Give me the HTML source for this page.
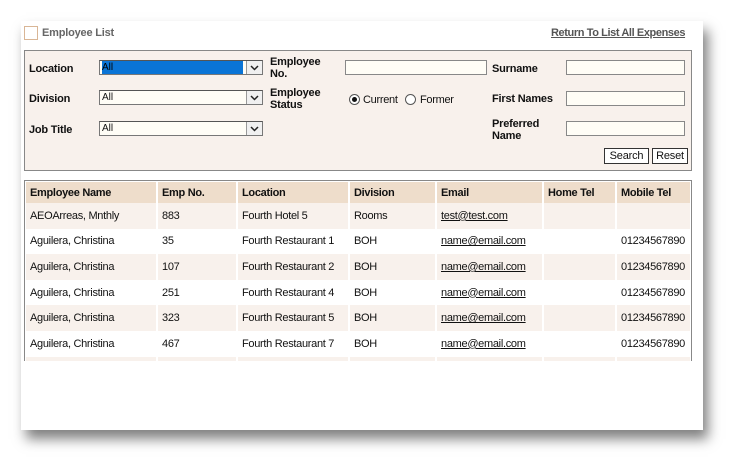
<!DOCTYPE html>
<html><head><style>
*{margin:0;padding:0;box-sizing:border-box}
body{width:745px;height:472px;background:#fff;position:relative;overflow:hidden;font-family:"Liberation Sans","DejaVu Sans",sans-serif;font-size:11px;color:#111}
.card{position:absolute;left:21px;top:21px;width:682px;height:409px;background:#fff;box-shadow:5px 9px 12px rgba(0,0,0,.5)}
.abs{position:absolute}
.lbl{font-weight:bold;font-size:11px;line-height:12px;letter-spacing:-0.2px}
.sel{position:absolute;height:15px;border:1px solid #777;border-top-color:#555;background:#fffdf6;font-size:10px;line-height:13px;padding-left:2px}
.sel .ar{position:absolute;right:0;top:0;width:16px;height:13px;border-left:1px solid #999;background:#f0f0f0}
.inp{position:absolute;height:15px;border:1px solid #888;background:#fffdf6}
.btn{position:absolute;height:16px;border:1px solid #333;background:#fff;font-size:11px;line-height:14px;text-align:center;letter-spacing:-0.2px}
table{border-collapse:separate;border-spacing:2px 0;position:absolute;left:24px;top:182px;width:668px}
td,th{height:25.6px;padding-left:4px;text-align:left;font-size:11px;white-space:nowrap;letter-spacing:-0.3px}
th{height:21px;background:#eeddcb;font-weight:bold}
tr.o td{background:#f8f1ec}
u{text-decoration:underline}
</style></head><body>
<div class="card"></div>
<div class="abs" style="left:24px;top:26px;width:14px;height:14px;border:1px solid #d9b696"></div>
<div class="abs lbl" style="left:42px;top:27px;color:#666">Employee List</div>
<div class="abs lbl" style="left:551px;top:27px;color:#555;text-decoration:underline;letter-spacing:-0.4px">Return To List All Expenses</div>
<div class="abs" style="left:24px;top:50px;width:668px;height:121px;background:#f8f1ec;border:1px solid #888"></div>
<div class="abs lbl" style="left:29px;top:63px">Location</div>
<div class="abs lbl" style="left:29px;top:93px">Division</div>
<div class="abs lbl" style="left:29px;top:124px">Job Title</div>
<div class="sel" style="left:99px;top:60px;width:164px"><span style="background:#0a74d6;color:#000;display:inline-block;width:141px">All</span><div class="ar"><svg width="15" height="13"><path d="M4 5l3.5 3.5L11 5" stroke="#222" stroke-width="1.5" fill="none"/></svg></div></div>
<div class="sel" style="left:99px;top:90px;width:164px">All<div class="ar"><svg width="15" height="13"><path d="M4 5l3.5 3.5L11 5" stroke="#222" stroke-width="1.5" fill="none"/></svg></div></div>
<div class="sel" style="left:99px;top:121px;width:164px">All<div class="ar"><svg width="15" height="13"><path d="M4 5l3.5 3.5L11 5" stroke="#222" stroke-width="1.5" fill="none"/></svg></div></div>
<div class="abs lbl" style="left:270px;top:56px">Employee<br>No.</div>
<div class="abs lbl" style="left:270px;top:87px">Employee<br>Status</div>
<div class="inp" style="left:345px;top:60px;width:142px"></div>
<div class="abs" style="left:349px;top:94px;width:11px;height:11px;border:1px solid #555;border-radius:50%;background:#fff"><div style="margin:2px;width:5px;height:5px;border-radius:50%;background:#111"></div></div>
<div class="abs" style="left:363px;top:94px;font-size:11px;letter-spacing:-0.3px">Current</div>
<div class="abs" style="left:405px;top:94px;width:11px;height:11px;border:1px solid #555;border-radius:50%;background:#fff"></div>
<div class="abs" style="left:420px;top:94px;font-size:11px;letter-spacing:-0.3px">Former</div>
<div class="abs lbl" style="left:492px;top:63px">Surname</div>
<div class="abs lbl" style="left:492px;top:93px">First Names</div>
<div class="abs lbl" style="left:492px;top:118px">Preferred<br>Name</div>
<div class="inp" style="left:566px;top:60px;width:119px"></div>
<div class="inp" style="left:566px;top:91px;width:119px"></div>
<div class="inp" style="left:566px;top:121px;width:119px"></div>
<div class="btn" style="left:604px;top:148px;width:45px">Search</div>
<div class="btn" style="left:652px;top:148px;width:36px">Reset</div>
<div class="abs" style="left:24px;top:180px;width:668px;height:181px;border:1px solid #888;border-bottom:none"></div>
<table>
<tr><th style="width:130px">Employee Name</th><th style="width:78px">Emp No.</th><th style="width:110px">Location</th><th style="width:85px">Division</th><th style="width:105px">Email</th><th style="width:71px">Home Tel</th><th>Mobile Tel</th></tr>
<tr class="o"><td>AEOArreas, Mnthly</td><td>883</td><td>Fourth Hotel 5</td><td>Rooms</td><td><u>test@test.com</u></td><td></td><td></td></tr>
<tr><td>Aguilera, Christina</td><td>35</td><td>Fourth Restaurant 1</td><td>BOH</td><td><u>name@email.com</u></td><td></td><td>01234567890</td></tr>
<tr class="o"><td>Aguilera, Christina</td><td>107</td><td>Fourth Restaurant 2</td><td>BOH</td><td><u>name@email.com</u></td><td></td><td>01234567890</td></tr>
<tr><td>Aguilera, Christina</td><td>251</td><td>Fourth Restaurant 4</td><td>BOH</td><td><u>name@email.com</u></td><td></td><td>01234567890</td></tr>
<tr class="o"><td>Aguilera, Christina</td><td>323</td><td>Fourth Restaurant 5</td><td>BOH</td><td><u>name@email.com</u></td><td></td><td>01234567890</td></tr>
<tr><td>Aguilera, Christina</td><td>467</td><td>Fourth Restaurant 7</td><td>BOH</td><td><u>name@email.com</u></td><td></td><td>01234567890</td></tr>
<tr class="o"><td style="height:4px"></td><td style="height:4px"></td><td style="height:4px"></td><td style="height:4px"></td><td style="height:4px"></td><td style="height:4px"></td><td style="height:4px"></td></tr>
</table>
</body></html>
